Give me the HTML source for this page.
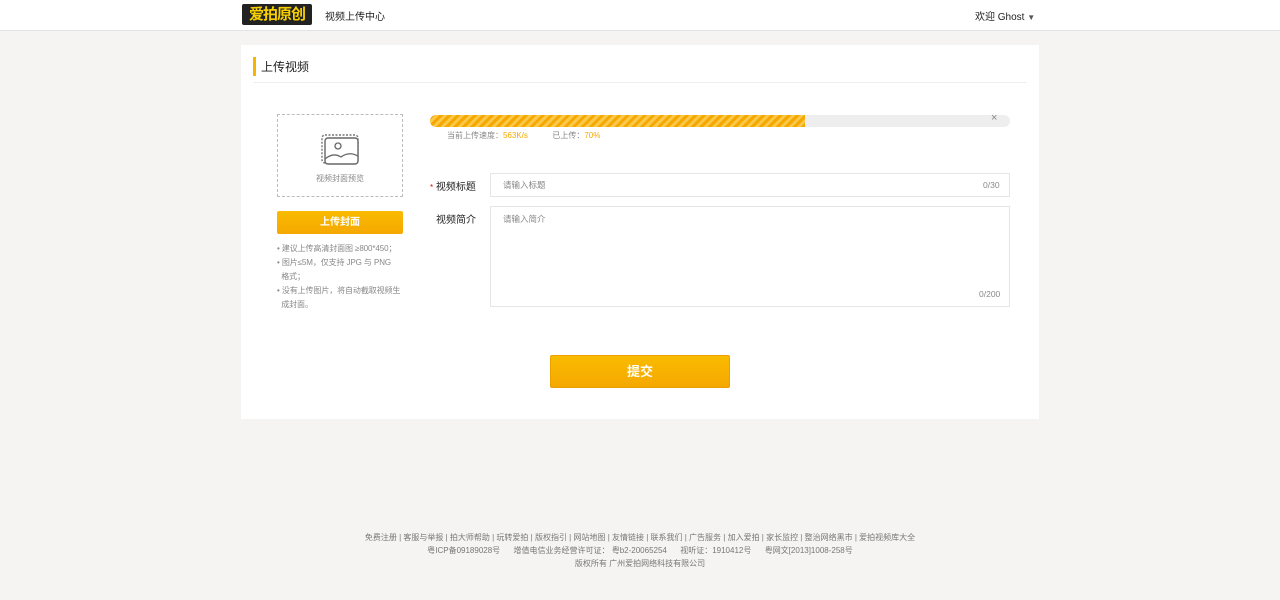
<!DOCTYPE html>
<html><head><meta charset="utf-8"><style>
*{margin:0;padding:0;box-sizing:border-box}
body{width:1280px;height:600px;background:#f5f4f3;font-family:"Liberation Sans","Noto Sans CJK SC",sans-serif;color:#333;position:relative;overflow:hidden}
.hdr{position:absolute;left:0;top:0;width:1280px;height:31px;background:#fff;border-bottom:1px solid #e3e3e3}
.abs{position:absolute;white-space:nowrap}
.logo{left:242px;top:4px;width:70px;height:21px;background:#222;border-radius:2px;font-size:15px;font-weight:bold;color:#f8d000;line-height:21px;text-align:center;letter-spacing:-1px}
.card{left:241px;top:45px;width:798px;height:374px;background:#fff}
.s{font-size:9px;color:#888}
</style></head><body>
<div class="hdr">
<div class="abs logo">爱拍原创</div>
<div class="abs" style="left:325px;top:8px;font-size:10px;color:#222">视频上传中心</div>
<div class="abs" style="left:975px;top:8px;font-size:10px;color:#222">欢迎 Ghost <span style="font-size:8px;color:#555">▼</span></div>
</div>
<div class="abs card">
<div class="abs" style="left:12px;top:12px;width:3px;height:19px;background:#f8b400"></div>
<div class="abs" style="left:20px;top:13px;font-size:12px;color:#222">上传视频</div>
<div class="abs" style="left:12px;top:37px;width:774px;height:1px;background:#eee"></div>
<div class="abs" style="left:36px;top:69px;width:126px;height:83px;border:1px dashed #bbb"></div>
<svg class="abs" style="left:80px;top:89px" width="39" height="32" viewBox="0 0 39 32"><rect x="1" y="1" width="36" height="28" rx="3" fill="none" stroke="#777" stroke-width="1.4" stroke-dasharray="2 1.5"/><rect x="4" y="4" width="33" height="26" rx="3" fill="#fff" stroke="#666" stroke-width="1.4"/><circle cx="17" cy="12" r="3" fill="none" stroke="#666" stroke-width="1.3"/><path d="M4 25 Q12 18 20 23 Q28 17 37 22" fill="none" stroke="#666" stroke-width="1.3"/></svg>
<div class="abs s" style="left:75px;top:128px;font-size:8px">视频封面预览</div>
<div class="abs" style="left:36px;top:166px;width:126px;height:23px;background:linear-gradient(#f9bb00,#f5a800);border-radius:2px;color:#fff;font-size:10px;font-weight:bold;text-align:center;line-height:23px">上传封面</div>
<div class="abs s" style="left:36px;top:197px;line-height:14px;font-size:8px;letter-spacing:-0.1px">• 建议上传高清封面图 ≥800*450；<br>• 图片≤5M，仅支持 JPG 与 PNG<br>&nbsp;&nbsp;格式；<br>• 没有上传图片，将自动截取视频生<br>&nbsp;&nbsp;成封面。</div>
<div class="abs" style="left:189px;top:70px;width:580px;height:12px;background:#eee;border-radius:6px;overflow:hidden"><div style="width:375px;height:12px;background:repeating-linear-gradient(-45deg,#f5a800 0 3px,#fcc84a 3px 6px)"></div></div>
<div class="abs" style="left:750px;top:67px;font-size:11px;color:#888">×</div>
<div class="abs s" style="left:206px;top:85px;font-size:8px">当前上传速度：<span style="color:#f5a800">563K/s</span>&nbsp;&nbsp;&nbsp;&nbsp;&nbsp;&nbsp;&nbsp;&nbsp;&nbsp;&nbsp;&nbsp;已上传：<span style="color:#f5a800">70%</span></div>
<div class="abs" style="left:189px;top:133px;font-size:10px;color:#222"><span style="color:#e00;font-size:8px">*</span> 视频标题</div>
<div class="abs" style="left:249px;top:128px;width:520px;height:24px;border:1px solid #e5e5e5"></div>
<div class="abs s" style="left:262px;top:134px;font-size:8.5px">请输入标题</div>
<div class="abs s" style="left:742px;top:135px;font-size:8.5px">0/30</div>
<div class="abs" style="left:195px;top:166px;font-size:10px;color:#222">视频简介</div>
<div class="abs" style="left:249px;top:161px;width:520px;height:101px;border:1px solid #e5e5e5"></div>
<div class="abs s" style="left:262px;top:168px;font-size:8.5px">请输入简介</div>
<div class="abs s" style="left:738px;top:244px;font-size:8.5px">0/200</div>
<div class="abs" style="left:309px;top:310px;width:180px;height:33px;background:linear-gradient(#f9bb00,#f5a800);border:1px solid #eaa000;border-radius:2px;color:#fff;font-size:13px;font-weight:bold;text-align:center;line-height:31px">提交</div>
</div>
<div class="abs s" style="left:0;top:531px;width:1280px;text-align:center;font-size:8px;line-height:13px;color:#777">免费注册 | 客服与举报 | 拍大师帮助 | 玩转爱拍 | 版权指引 | 网站地图 | 友情链接 | 联系我们 | 广告服务 | 加入爱拍 | 家长监控 | 整治网络黑市 | 爱拍视频库大全<br>粤ICP备09189028号&nbsp;&nbsp;&nbsp;&nbsp;&nbsp;&nbsp;增值电信业务经营许可证： 粤b2-20065254&nbsp;&nbsp;&nbsp;&nbsp;&nbsp;&nbsp;视听证：1910412号&nbsp;&nbsp;&nbsp;&nbsp;&nbsp;&nbsp;粤网文[2013]1008-258号<br>版权所有 广州爱拍网络科技有限公司</div>
</body></html>
